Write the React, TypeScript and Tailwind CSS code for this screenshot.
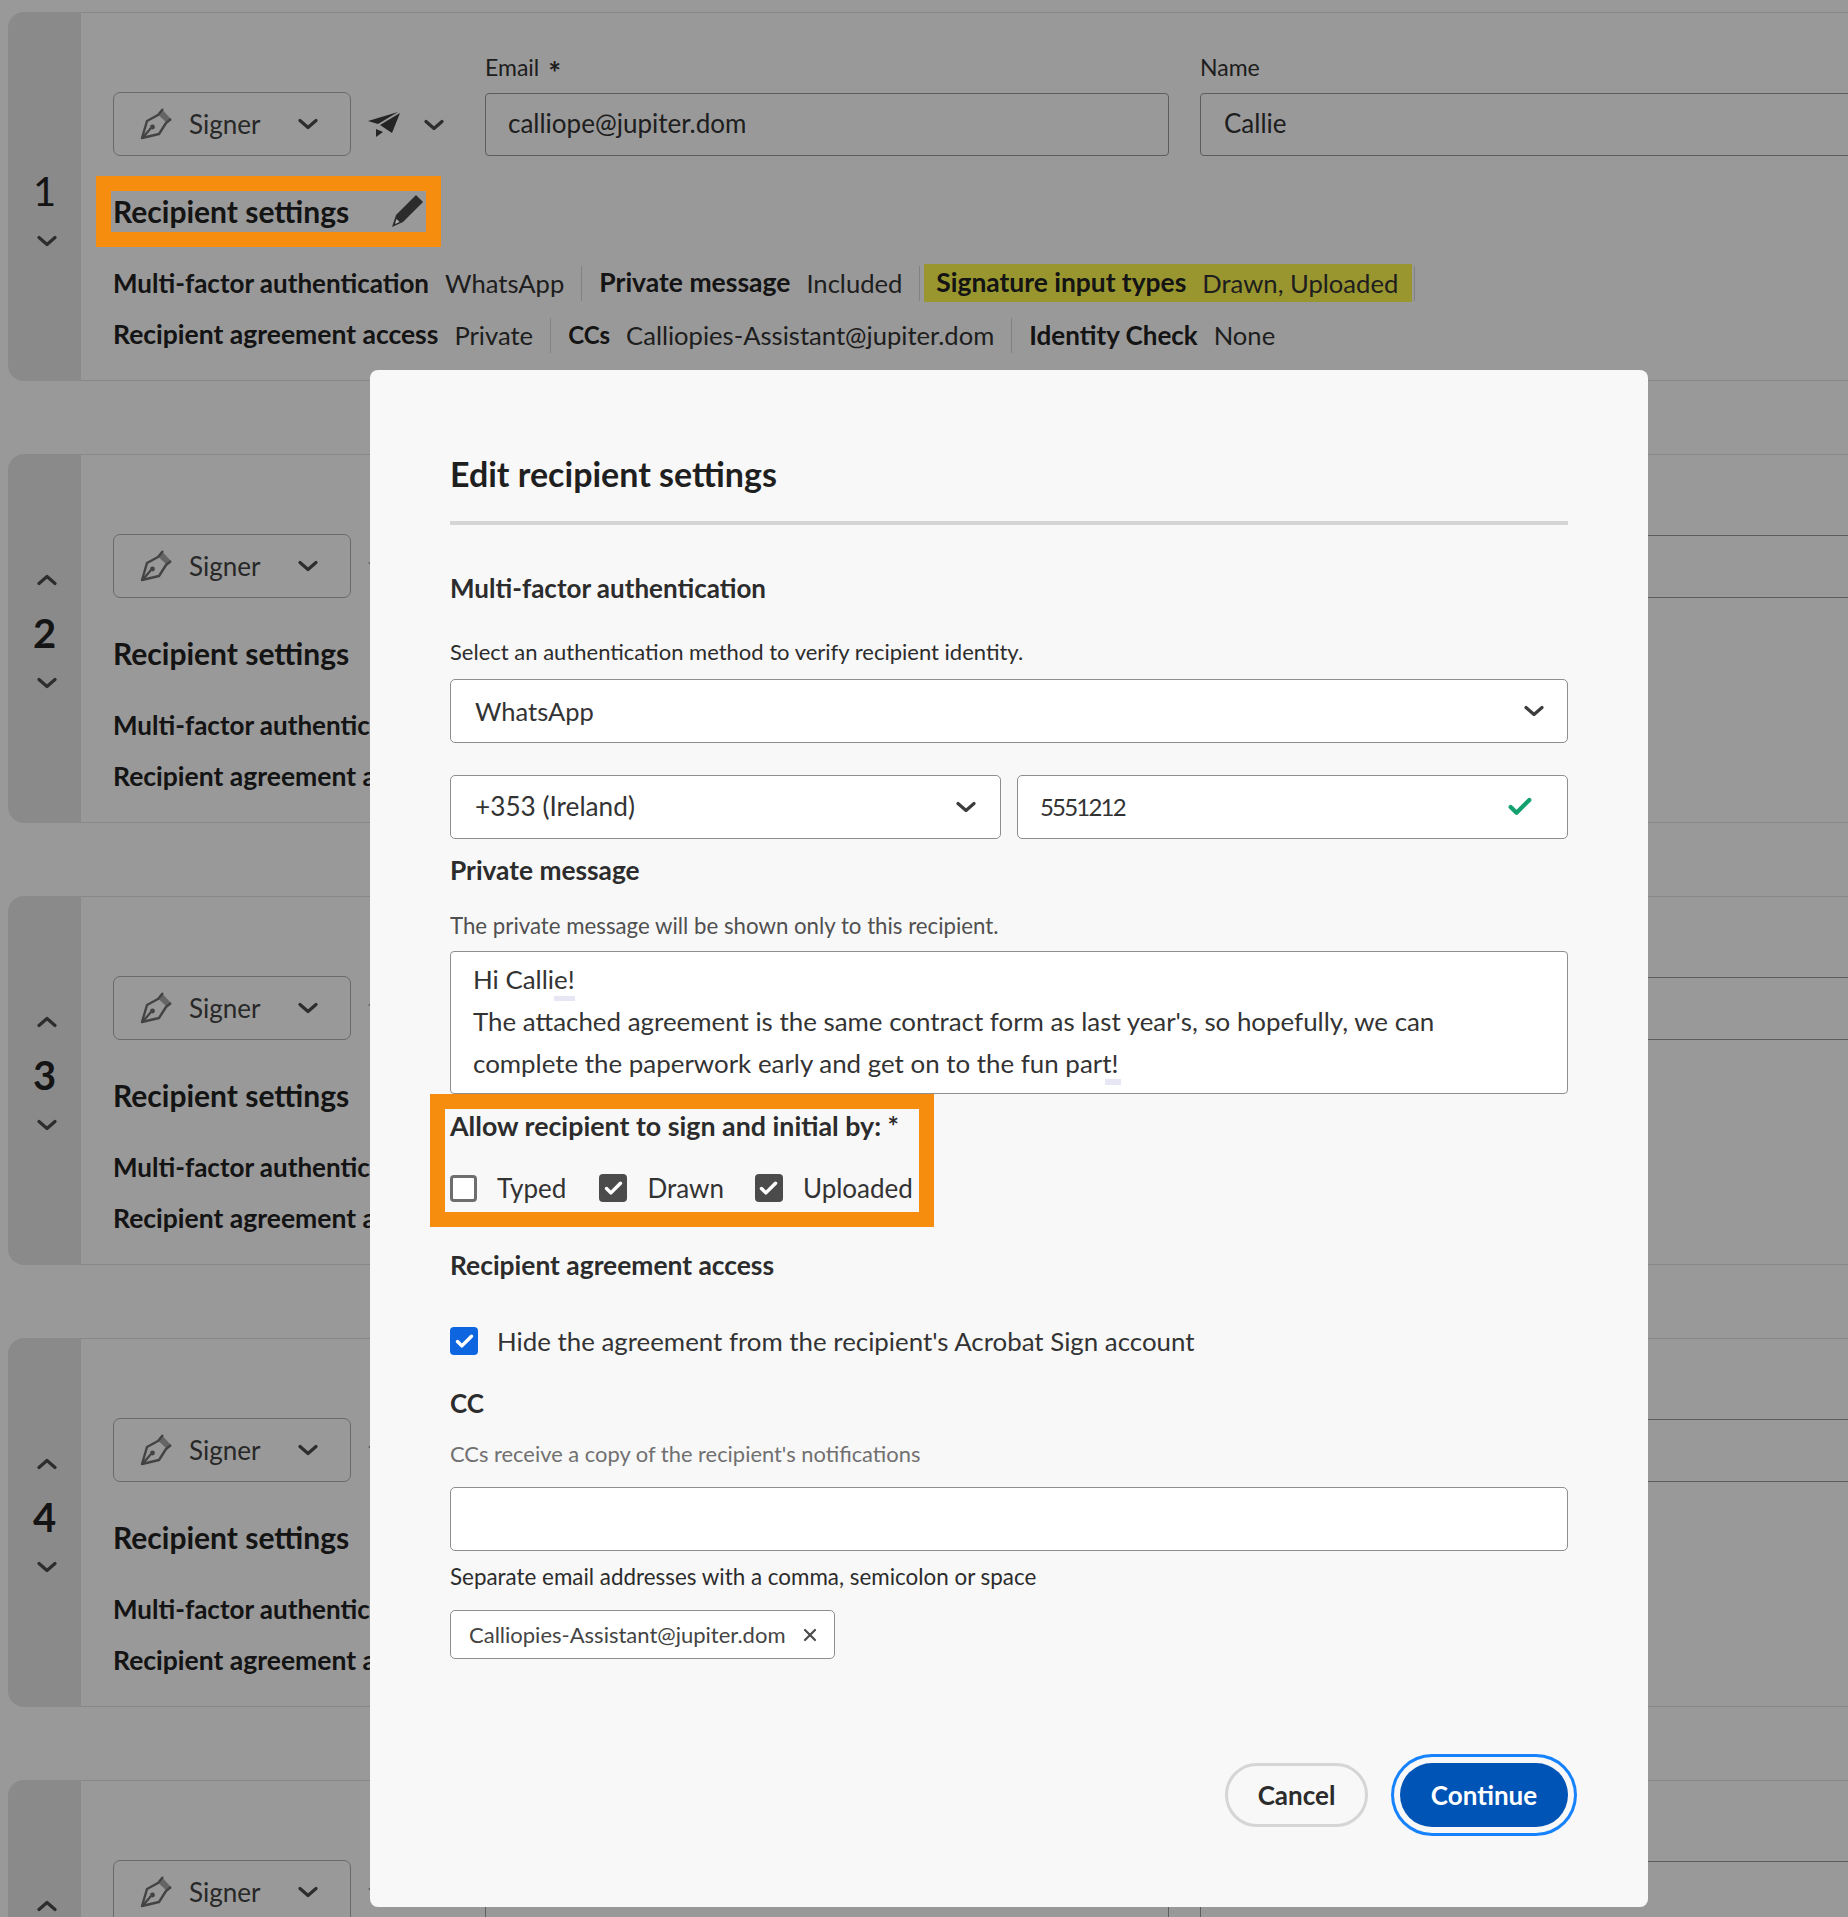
import { Check, X } from "lucide-react";
import type { ReactNode } from "react";

function Chevron({ up = false, color = "#4b4b4b" }: { up?: boolean; color?: string }) {
  return (
    <svg width="20" height="12" viewBox="0 0 20 12" fill="none" className={up ? "rotate-180" : ""}>
      <path d="M2 2.5 L10 9.5 L18 2.5" stroke={color} strokeWidth="3.2" strokeLinecap="round" strokeLinejoin="round" />
    </svg>
  );
}

function PenIcon() {
  return (
    <svg width="32" height="32" viewBox="0 0 32 32" fill="none">
      <path d="M18 6.5 L27 15 L31 11 L23 2.5 Z" fill="#a8a8a8" />
      <path d="M23 1 L18 7 L7 13 L2 30 L19 26 L26 15 L31 11" stroke="#707070" strokeWidth="2.4" strokeLinejoin="round" />
      <path d="M2.5 30 L11 20" stroke="#707070" strokeWidth="2.2" />
      <circle cx="12.5" cy="19" r="2.4" fill="#707070" />
    </svg>
  );
}

function SendIcon() {
  return (
    <svg width="38" height="30" viewBox="0 0 38 30" fill="#3c3c3c">
      <polygon points="2,11 32,2 12,14" />
      <polygon points="34,3 14,15 26,23" />
      <polygon points="10,19 17,22 10,27" />
    </svg>
  );
}

function PencilIcon() {
  return (
    <svg width="34" height="34" viewBox="0 0 34 34">
      <path d="M25 1 L32 8 L12 28 L1 33 L5 21 Z" fill="#2c2c2c" />
      <path d="M5.5 25 L8.5 28 L4 30 Z" fill="#b5b5b5" />
    </svg>
  );
}

function Meta({ label, value, size, sep = true }: { label: string; value: string; size: string; sep?: boolean }) {
  return (
    <div className="flex items-center">
      <span className={`font-bold text-[#222222] ${size}`}>{label}</span>
      <span className="ml-[16px] text-[25.6px] text-[#333333]">{value}</span>
      {sep && <span className="mx-[17px] h-[35px] border-l border-[#d9d9d9]" />}
    </div>
  );
}

function RecipientCard({ n }: { n: number }) {
  return (
    <div className="flex h-[369px] shrink-0">
      <div className="flex w-[73px] shrink-0 flex-col items-center rounded-l-[16px] bg-[#e6e6e6] pt-[120px]">
        <div className="ml-[4px] flex h-[12px] items-center">{n > 1 && <Chevron up />}</div>
        <div className={`mt-[25px] h-[44px] text-[40px] leading-[44px] text-[#222222] ${n > 1 ? "font-bold" : ""}`}>{n}</div>
        <div className="ml-[4px] mt-[22px]">
          <Chevron />
        </div>
      </div>
      <div className="flex min-w-0 flex-1 flex-col border-y border-[#e3e3e3] pl-[32px] pt-[41px]">
        <div className="flex items-end">
          <button className="flex h-[64px] w-[238px] shrink-0 items-center rounded-[7px] border border-[#b0b0b0] pl-[26px] text-[26px] text-[#444444]">
            <PenIcon />
            <span className="ml-[17px]">Signer</span>
            <span className="ml-auto mr-[32px]">
              <Chevron />
            </span>
          </button>
          <div className="ml-[15px] flex h-[63px] w-[119px] shrink-0 items-center">
            <SendIcon />
            <span className="ml-[20px]">
              <Chevron />
            </span>
          </div>
          <div className="w-[684px] shrink-0">
            <div className="flex h-[28px] items-center gap-[9px] pb-[2px] text-[23px] text-[#333333]">
              Email <span className="mt-[9px] text-[30px] font-bold leading-none">*</span>
            </div>
            <div className="mt-[11px] flex h-[63px] items-center rounded-[4px] border border-[#9c9c9c] pb-[2px] pl-[22px] text-[26px] text-[#333333]">
              calliope@jupiter.dom
            </div>
          </div>
          <div className="ml-[31px] w-[800px] shrink-0">
            <div className="h-[28px] text-[23px] leading-[26px] text-[#333333]">Name</div>
            <div className="mt-[11px] flex h-[63px] items-center rounded-[4px] border border-[#9c9c9c] pb-[2px] pl-[23px] text-[26px] text-[#333333]">
              Callie
            </div>
          </div>
        </div>
        <div className="mt-[35px] flex h-[40px] items-center text-[30px] font-bold text-[#222222]">Recipient settings</div>
        <div className="mt-[33px] flex h-[38px] items-center whitespace-nowrap">
          <Meta label="Multi-factor authentication" value="WhatsApp" size="text-[26px]" />
          <Meta label="Private message" value="Included" size="text-[26.5px]" sep={false} />
          <span className="ml-[17px] h-[35px] border-l border-[#d9d9d9]" />
          <span className="ml-[4px] flex h-[38px] items-center bg-[#fffa50] pl-[12px] pr-[14px]">
            <Meta label="Signature input types" value="Drawn, Uploaded" size="text-[26.4px]" sep={false} />
          </span>
          <span className="ml-[2px] h-[35px] border-l border-[#d9d9d9]" />
        </div>
        <div className="mt-[15px] flex h-[36px] items-center whitespace-nowrap">
          <Meta label="Recipient agreement access" value="Private" size="text-[26.5px]" />
          <Meta label="CCs" value="Calliopies-Assistant@jupiter.dom" size="text-[24px]" />
          <Meta label="Identity Check" value="None" size="text-[26px]" sep={false} />
        </div>
      </div>
    </div>
  );
}

function Box({ checked, blue = false }: { checked: boolean; blue?: boolean }) {
  if (!checked) return <span className="block h-[27px] w-[27px] shrink-0 rounded-[4px] border-[3.5px] border-[#6e6e6e] bg-white" />;
  return (
    <span className={`flex h-[28px] w-[28px] shrink-0 items-center justify-center rounded-[4px] ${blue ? "bg-[#0d66e0]" : "bg-[#4b4b4b]"}`}>
      <Check size={21} strokeWidth={4} color="#ffffff" />
    </span>
  );
}

function Heading({ className, children }: { className: string; children: ReactNode }) {
  return <div className={`flex h-[34px] items-center font-bold text-[#2c2c2c] ${className}`}>{children}</div>;
}

function Hint({ className, children }: { className: string; children: ReactNode }) {
  return <div className={`flex h-[30px] items-center ${className}`}>{children}</div>;
}

function Field({ className, children }: { className: string; children: ReactNode }) {
  return (
    <div className={`flex h-[64px] items-center rounded-[5px] border border-[#8e8e8e] bg-white text-[#333333] ${className}`}>
      {children}
    </div>
  );
}

function Modal() {
  return (
    <div className="absolute left-[370px] top-[370px] h-[1537px] w-[1278px] rounded-[8px] bg-[#f8f8f8] px-[80px] pt-[81px]">
      <div className="flex h-[44px] items-center text-[34px] font-bold text-[#1f1f1f]">Edit recipient settings</div>
      <div className="mt-[26px] h-[4px] bg-[#d5d5d5]" />
      <Heading className="mt-[46px] text-[26px]">Multi-factor authentication</Heading>
      <Hint className="mt-[31px] text-[22px] text-[#2c2c2c]">Select an authentication method to verify recipient identity.</Hint>
      <Field className="mt-[13px] pl-[24px] pr-[23px] text-[25.5px]">
        WhatsApp
        <span className="ml-auto">
          <Chevron color="#3c3c3c" />
        </span>
      </Field>
      <div className="mt-[32px] flex gap-[16px]">
        <Field className="w-[551px] pl-[24px] pr-[24px] text-[26.2px]">
          +353 (Ireland)
          <span className="ml-auto">
            <Chevron color="#3c3c3c" />
          </span>
        </Field>
        <Field className="flex-1 pl-[22px] pr-[33px] text-[24px]">
          <span className="tracking-[-1.8px]">5551212</span>
          <Check size={28} strokeWidth={3.6} color="#12a06e" className="ml-auto" />
        </Field>
      </div>
      <Heading className="mt-[15px] text-[26.3px]">Private message</Heading>
      <Hint className="mt-[23px] text-[22.25px] text-[#505050]">The private message will be shown only to this recipient.</Hint>
      <div className="relative mt-[10px] h-[143px] rounded-[4px] border border-[#8e8e8e] bg-white pl-[22px] pt-[6px] text-[25.9px] leading-[42px] text-[#333333]">
        <div>Hi Callie!</div>
        <div>The attached agreement is the same contract form as last year's, so hopefully, we can</div>
        <div>complete the paperwork early and get on to the fun part!</div>
        <span className="absolute left-[103px] top-[44px] h-[5px] w-[21px] bg-[#e6e6f5]" />
        <span className="absolute left-[654px] top-[127px] h-[6px] w-[16px] bg-[#e6e6f5]" />
      </div>
      <Heading className="mt-[15px] text-[26.8px]">Allow recipient to sign and initial by: *</Heading>
      <div className="mt-[30px] flex h-[30px] items-center text-[26px] text-[#333333]">
        <Box checked={false} />
        <span className="ml-[20px]">Typed</span>
        <span className="ml-[33px]">
          <Box checked />
        </span>
        <span className="ml-[20px]">Drawn</span>
        <span className="ml-[31px]">
          <Box checked />
        </span>
        <span className="ml-[20px]">Uploaded</span>
      </div>
      <Heading className="mt-[46px] text-[26.4px]">Recipient agreement access</Heading>
      <div className="mt-[43px] flex h-[30px] items-center text-[25.85px] text-[#333333]">
        <Box checked blue />
        <span className="ml-[19px]">Hide the agreement from the recipient's Acrobat Sign account</span>
      </div>
      <Heading className="mt-[30px] text-[26px]">CC</Heading>
      <Hint className="mt-[19px] text-[21.9px] text-[#707070]">CCs receive a copy of the recipient's notifications</Hint>
      <Field className="mt-[18px]">{""}</Field>
      <Hint className="mt-[11px] text-[22.4px] text-[#2c2c2c]">Separate email addresses with a comma, semicolon or space</Hint>
      <div className="mt-[18px] flex h-[49px] w-[385px] items-center whitespace-nowrap rounded-[5px] border border-[#8e8e8e] bg-white pl-[18px] text-[22px] text-[#444444]">
        Calliopies-Assistant@jupiter.dom
        <X size={20} strokeWidth={2.6} color="#4b4b4b" className="ml-auto mr-[14px]" />
      </div>
      <div className="mt-[104px] flex justify-end gap-[32px]">
        <button className="h-[64px] w-[143px] rounded-full border-[3px] border-[#d5d5d5] text-[26px] font-bold text-[#2c2c2c]">Cancel</button>
        <button className="h-[64px] w-[168px] rounded-full bg-[#0054b6] text-[26px] font-bold text-white shadow-[0_0_0_6px_#f8f8f8,0_0_0_9px_#1682fb]">
          Continue
        </button>
      </div>
    </div>
  );
}

export default function App() {
  return (
    <div className="relative h-[1917px] w-full overflow-hidden bg-white font-['Lato',sans-serif]">
      <div className="flex h-full flex-col gap-[73px] pl-[8px] pt-[12px]">
        {[1, 2, 3, 4, 5].map((n) => (
          <RecipientCard key={n} n={n} />
        ))}
      </div>
      <div className="absolute inset-0 bg-black/40" />
      {/* annotation frames sit above the dim layer */}
      <div className="absolute left-[96px] top-[176px] h-[71px] w-[345px] border-[15px] border-[#f78d0f]">
        <div className="absolute left-[280px] top-[3px]">
          <PencilIcon />
        </div>
      </div>
      <Modal />
      <div className="absolute left-[430px] top-[1094px] h-[133px] w-[504px] border-[15px] border-[#f78d0f]" />
    </div>
  );
}
